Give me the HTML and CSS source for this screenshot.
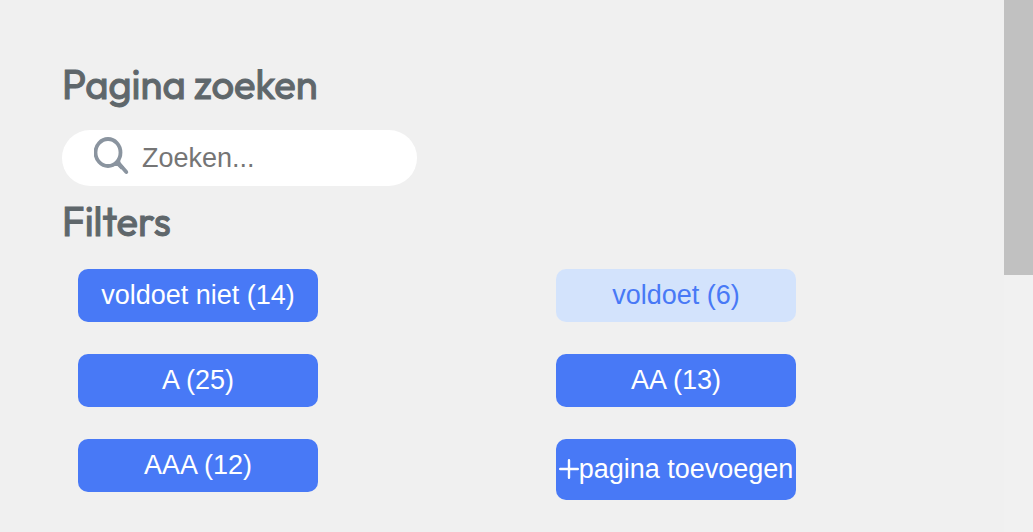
FILE: index.html
```
<!DOCTYPE html>
<html lang="nl">
<head>
<meta charset="utf-8">
<meta name="viewport" content="width=device-width, initial-scale=1">
<title>Pagina zoeken</title>
<link rel="stylesheet" href="styles.css">
</head>
<body>
<div class="layout">
  <main class="content">
    <h2 class="heading"><label for="search">Pagina zoeken</label></h2>
    <div class="search">
      <svg class="search-icon" viewBox="0 0 36 40" aria-hidden="true">
        <ellipse cx="14" cy="16.5" rx="12.5" ry="13.5"/>
        <path d="M24 26.5L32.3 36"/>
        <path class="joint" d="M18 30L26 23L26.5 27L30 31L27 33.5L23.5 30Z"/>
      </svg>
      <input class="search-input" id="search" type="text" placeholder="Zoeken...">
    </div>
    <h2 class="heading">Filters</h2>
    <div class="filters">
      <button class="button" type="button">voldoet niet (14)</button>
      <button class="button button-light" type="button">voldoet (6)</button>
      <button class="button" type="button">A (25)</button>
      <button class="button" type="button">AA (13)</button>
      <button class="button" type="button">AAA (12)</button>
      <button class="button button-add" type="button"><svg class="plus" viewBox="0 0 20 20" aria-hidden="true"><path d="M10 1.2V18.8M1.2 10H18.8"/></svg>pagina toevoegen</button>
    </div>
  </main>
  <div class="scrollbar" aria-hidden="true"><div class="thumb"></div></div>
</div>
</body>
</html>
```
FILE: styles.css
```
* { box-sizing: border-box; }

body {
  margin: 0;
  background: #f0f0f0;
  font-family: "Liberation Sans", Arial, sans-serif;
  font-size: 27px;
  line-height: 30px;
}

.layout {
  display: flex;
  min-height: 100vh;
}

.content {
  flex: 1;
  padding: 60px 0 0 62px;
}

.heading {
  margin: 0;
  color: #5f676b;
  font-family: Outfit, Lato, sans-serif;
  font-size: 40px;
  font-weight: 400;
  line-height: 48px;
  -webkit-text-stroke: 1px #5f676b;
}

.search {
  display: flex;
  align-items: center;
  gap: 12px;
  width: 355px;
  max-width: 100%;
  height: 56px;
  margin: 22px 0 11px;
  padding: 0 30px 0 32px;
  border-radius: 28px;
  background: #fff;
}

.search-icon {
  flex: none;
  width: 36px;
  height: 40px;
  margin-bottom: 4px;
  fill: none;
  stroke: #8a949f;
  stroke-width: 3.8;
  stroke-linecap: round;
}

.search-icon .joint {
  fill: #8a949f;
  stroke: none;
}

.search-input {
  flex: 1;
  min-width: 0;
  padding: 0;
  border: 0;
  outline: 0;
  background: none;
  font: inherit;
}

.search-input::placeholder {
  color: #757575;
  opacity: 1;
}

.filters {
  display: grid;
  grid-template-columns: 1fr 1fr;
  column-gap: 14px;
  row-gap: 32px;
  align-items: start;
  margin: 24px -16px 0 0;
  padding-left: 16px;
}

.button {
  display: flex;
  align-items: center;
  justify-content: center;
  width: 240px;
  padding: 11px 0 12px;
  border: 0;
  border-radius: 10px;
  background: #4879f6;
  color: #fff;
  font: inherit;
  white-space: nowrap;
}

.button-light {
  background: #d3e3fc;
  color: #4879f6;
}

.button-add {
  padding: 15px 0 16px;
}

.plus {
  flex: none;
  width: 20px;
  height: 20px;
  fill: none;
  stroke: #fff;
  stroke-width: 2.4;
  stroke-linecap: round;
}

.scrollbar {
  flex: none;
  width: 29px;
  background: #f1f1f1;
}

.thumb {
  height: 275px;
  background: #c1c1c1;
}
```
